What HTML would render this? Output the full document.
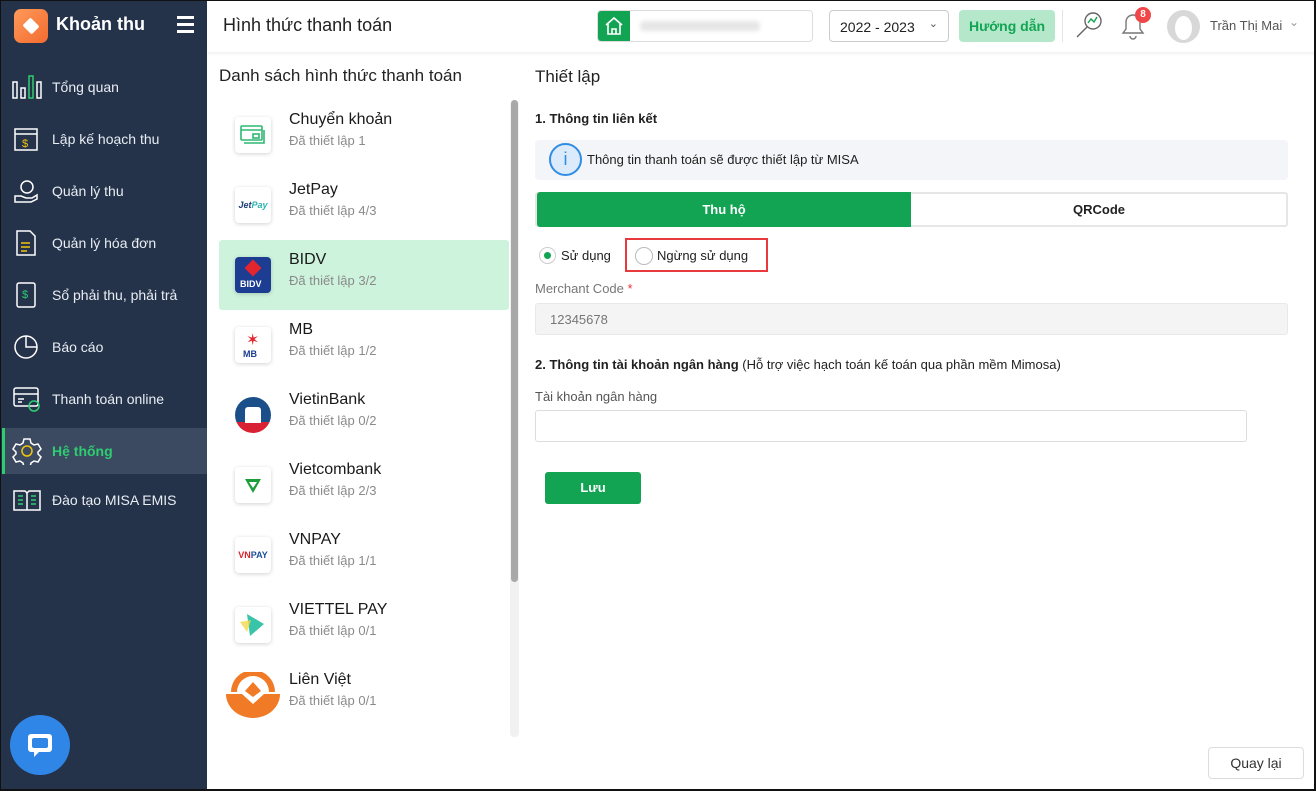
<!DOCTYPE html>
<html><head><meta charset="utf-8"><style>
*{box-sizing:border-box;margin:0;padding:0}
body{width:1316px;height:791px;overflow:hidden;font-family:"Liberation Sans",sans-serif;background:#fff;position:relative;color:#212121}
.a{position:absolute}
#frame{position:absolute;left:0;top:0;width:1316px;height:791px;border:2px solid #111;border-left-width:1px;border-top-width:1px;pointer-events:none;z-index:10}
.side{left:0;top:0;width:207px;height:791px;background:#25334a}
.mi{position:absolute;left:0;width:207px;height:46px;color:#e8edf3;font-size:14px;display:flex;align-items:center}
.mi span{position:absolute;left:52px}
.mi svg{position:absolute;left:12px}
.li{position:absolute;left:219px;width:290px;height:70px}
.li .ic{position:absolute;left:16px;top:17px;width:36px;height:36px;background:#fff;border-radius:4px;box-shadow:0 1px 4px rgba(0,0,0,.18);display:flex;align-items:center;justify-content:center;overflow:hidden}
.li .n{position:absolute;left:70px;top:11px;font-size:16px;color:#1a1a1a}
.li .s{position:absolute;left:70px;top:33px;font-size:13px;color:#8a8a8a}
</style></head><body>
<div id="frame"></div>
<div class="a side">
  <div class="a" style="left:14px;top:9px;width:34px;height:34px;border-radius:7px;background:linear-gradient(135deg,#ff9a5a,#f26b2f)"><div class="a" style="left:9px;top:10px;width:16px;height:14px;background:#fff;transform:rotate(45deg) scale(.8);border-radius:2px"></div></div>
  <div class="a" style="left:56px;top:14px;color:#fff;font-size:18px;font-weight:bold">Khoản thu</div>
  <div class="a" style="left:177px;top:16px;width:17px;height:3px;background:#fff;box-shadow:0 7px 0 #fff,0 14px 0 #fff"></div>
  <div class="mi" style="top:64px"><svg width="30" height="26" viewBox="0 0 30 26" fill="none" stroke="#fff" stroke-width="1.5"><rect x="1" y="8" width="4" height="16"/><rect x="9" y="14" width="4" height="10"/><rect x="17" y="2" width="4" height="22" stroke="#2ecc71"/><rect x="25" y="8" width="4" height="16"/></svg><span>Tổng quan</span></div>
  <div class="mi" style="top:116px"><svg width="30" height="26" viewBox="0 0 30 26" fill="none" stroke="#fff" stroke-width="1.5"><rect x="3" y="3" width="22" height="21"/><line x1="3" y1="8" x2="25" y2="8"/><text x="10" y="21" font-size="11" fill="#f1c40f" stroke="none">$</text></svg><span>Lập kế hoạch thu</span></div>
  <div class="mi" style="top:168px"><svg width="30" height="26" viewBox="0 0 30 26" fill="none" stroke="#fff" stroke-width="1.5"><circle cx="15" cy="9" r="6"/><path d="M3 18h6l5 2h6l5-3v4l-6 3H3z"/></svg><span>Quản lý thu</span></div>
  <div class="mi" style="top:220px"><svg width="30" height="26" viewBox="0 0 30 26" fill="none" stroke="#fff" stroke-width="1.5"><path d="M5 1h13l5 5v19H5z"/><path d="M9 13h9M9 17h9M9 21h6" stroke="#f1c40f"/></svg><span>Quản lý hóa đơn</span></div>
  <div class="mi" style="top:272px"><svg width="30" height="26" viewBox="0 0 30 26" fill="none" stroke="#fff" stroke-width="1.5"><rect x="5" y="1" width="18" height="24" rx="2"/><text x="10" y="16" font-size="11" fill="#2ecc71" stroke="none">$</text></svg><span>Sổ phải thu, phải trả</span></div>
  <div class="mi" style="top:324px"><svg width="30" height="26" viewBox="0 0 30 26" fill="none" stroke="#fff" stroke-width="1.5"><circle cx="14" cy="13" r="11"/><path d="M14 2v11h11"/></svg><span>Báo cáo</span></div>
  <div class="mi" style="top:376px"><svg width="30" height="26" viewBox="0 0 30 26" fill="none" stroke="#fff" stroke-width="1.5"><rect x="2" y="2" width="24" height="18" rx="2"/><line x1="2" y1="8" x2="26" y2="8"/><path d="M6 13h6M6 16h4"/><circle cx="22" cy="20" r="5" stroke="#2ecc71"/></svg><span>Thanh toán online</span></div>
  <div class="a" style="left:2px;top:428px;width:205px;height:46px;background:#3c4a61;border-left:3px solid #2ecc71"></div>
  <div class="mi" style="top:428px;color:#2ecc71;font-weight:bold"><svg width="30" height="28" viewBox="0 0 30 28" fill="none" stroke="#fff" stroke-width="1.5"><path d="M12 2h6l1 4 3 2 4-1 3 5-3 3v2l3 3-3 5-4-1-3 2-1 4h-6l-1-4-3-2-4 1-3-5 3-3v-2l-3-3 3-5 4 1 3-2z"/><circle cx="15" cy="14" r="5" stroke="#f1c40f"/></svg><span>Hệ thống</span></div>
  <div class="mi" style="top:477px"><svg width="30" height="26" viewBox="0 0 30 26" fill="none" stroke="#fff" stroke-width="1.5"><path d="M2 4h11l2 2 2-2h11v19H2z"/><line x1="15" y1="6" x2="15" y2="23"/><path d="M6 9h5M6 13h5M6 17h5M19 9h5M19 13h5M19 17h5" stroke="#2ecc71"/></svg><span>Đào tạo MISA EMIS</span></div>
  <div class="a" style="left:10px;top:715px;width:60px;height:60px;border-radius:50%;background:#2f86e6"><svg class="a" style="left:16px;top:16px" width="28" height="28" viewBox="0 0 28 28"><path d="M5 3h18a3 3 0 013 3v12a3 3 0 01-3 3H13l-5 5v-5H5a3 3 0 01-3-3V6a3 3 0 013-3z" fill="#fff"/><rect x="6" y="7" width="16" height="10" rx="2" fill="#2f86e6"/></svg></div>
</div>

<div class="a" style="left:207px;top:0;width:1109px;height:52px;background:#fff;box-shadow:0 2px 3px rgba(0,0,0,.06)"></div>
<div class="a" style="left:223px;top:15px;font-size:18px;color:#222">Hình thức thanh toán</div>
<div class="a" style="left:597px;top:10px;width:216px;height:32px;border:1px solid #ddd;border-radius:4px;overflow:hidden"><div class="a" style="left:0;top:0;width:32px;height:32px;background:#12a453"></div><svg class="a" style="left:6px;top:5px" width="20" height="20" viewBox="0 0 20 20" fill="none" stroke="#fff" stroke-width="1.6"><path d="M2 9l8-7 8 7M4 8v10h12V8M8 18v-5h4v5"/></svg><div class="a" style="left:42px;top:10px;width:120px;height:10px;background:#e6e6e6;border-radius:4px;filter:blur(2px)"></div></div>
<div class="a" style="left:829px;top:10px;width:120px;height:32px;border:1px solid #ccc;border-radius:4px;font-size:14px;padding:8px 10px">2022 - 2023<span class="a" style="right:10px;top:6px;font-size:11px;color:#555">⌄</span></div>
<div class="a" style="left:959px;top:10px;width:96px;height:32px;background:#b5e8cb;border-radius:4px;color:#12a453;font-weight:bold;font-size:14px;text-align:center;line-height:32px">Hướng dẫn</div>
<div class="a" style="left:1062px;top:10px;width:1px;height:32px;background:#e4e4e4"></div>
<svg class="a" style="left:1074px;top:10px" width="30" height="30" viewBox="0 0 30 30" fill="none" stroke="#666" stroke-width="1.4"><circle cx="19" cy="11" r="8"/><path d="M13 17L3 27"/><path d="M14 13l3-4 3 3 3-5" stroke="#12a453"/></svg>
<svg class="a" style="left:1120px;top:12px" width="26" height="28" viewBox="0 0 26 28" fill="none" stroke="#777" stroke-width="1.4"><path d="M13 3a7 7 0 017 7v7l3 4H3l3-4v-7a7 7 0 017-7zM10 24a3 3 0 006 0"/></svg>
<div class="a" style="left:1135px;top:7px;width:16px;height:16px;border-radius:50%;background:#f04848;color:#fff;font-size:10px;font-weight:bold;text-align:center;line-height:16px">8</div>
<div class="a" style="left:1167px;top:10px;width:33px;height:33px;border-radius:50%;background:#d8d8d8"><div class="a" style="left:8px;top:6px;width:17px;height:24px;border-radius:50%;background:#fff"></div></div>
<div class="a" style="left:1210px;top:18px;font-size:13px;color:#555">Trần Thị Mai</div>
<div class="a" style="left:1289px;top:15px;font-size:12px;color:#999">⌄</div>

<div class="a" style="left:219px;top:66px;font-size:17px;color:#222">Danh sách hình thức thanh toán</div>
<div class="a" style="left:510px;top:100px;width:9px;height:637px;background:#f1f1f1;border-radius:4px"></div>
<div class="a" style="left:511px;top:100px;width:7px;height:482px;background:#a8a8a8;border-radius:4px"></div>
<div class="a" style="left:219px;top:240px;width:290px;height:70px;background:#cdf3dc;border-radius:3px"></div>

<div class="li" style="top:100px"><div class="ic"><svg width="26" height="22" viewBox="0 0 26 22" fill="none" stroke="#2eb872" stroke-width="1.6"><rect x="1" y="2" width="21" height="14" rx="1"/><line x1="1" y1="6" x2="22" y2="6"/><rect x="13" y="10" width="6" height="4"/><path d="M4 19h20V6"/></svg></div><div class="n">Chuyển khoản</div><div class="s">Đã thiết lập 1</div></div>
<div class="li" style="top:170px"><div class="ic"><span style="font-size:9px;font-style:italic;font-weight:bold;color:#1f3d7a">Jet<span style="color:#2db3b0">Pay</span></span></div><div class="n">JetPay</div><div class="s">Đã thiết lập 4/3</div></div>
<div class="li" style="top:240px"><div class="ic" style="background:#1d3d93"><div class="a" style="left:12px;top:5px;width:12px;height:12px;background:#e3252d;transform:rotate(45deg)"></div><span class="a" style="left:5px;top:22px;font-size:9px;color:#fff;font-weight:bold">BIDV</span></div><div class="n">BIDV</div><div class="s">Đã thiết lập 3/2</div></div>
<div class="li" style="top:310px"><div class="ic"><span class="a" style="left:11px;top:3px;font-size:16px;color:#e3252d">✶</span><span class="a" style="left:8px;top:22px;font-size:9px;color:#1d3d93;font-weight:bold">MB</span></div><div class="n">MB</div><div class="s">Đã thiết lập 1/2</div></div>
<div class="li" style="top:380px"><div class="a" style="left:16px;top:17px;width:36px;height:36px;border-radius:50%;background:linear-gradient(#1b4f8a 70%,#d82233 70%);overflow:hidden"><div class="a" style="left:10px;top:10px;width:16px;height:16px;background:#fff;border-radius:3px 3px 0 0"></div></div><div class="n">VietinBank</div><div class="s">Đã thiết lập 0/2</div></div>
<div class="li" style="top:450px"><div class="ic"><svg width="18" height="18" viewBox="0 0 18 18"><path d="M1 3h16L9 17z" fill="#1e9e3a"/><path d="M5 6h8L9 12z" fill="#fff"/></svg></div><div class="n">Vietcombank</div><div class="s">Đã thiết lập 2/3</div></div>
<div class="li" style="top:520px"><div class="ic"><span style="font-size:9px;font-weight:bold;color:#d8232a">VN<span style="color:#1b4f9c">PAY</span></span></div><div class="n">VNPAY</div><div class="s">Đã thiết lập 1/1</div></div>
<div class="li" style="top:590px"><div class="ic"><svg width="30" height="30" viewBox="0 0 30 30"><path d="M9 4l17 10-14 12z" fill="#38c4a8"/><path d="M2 12l11-2-4 12z" fill="#f3d94c" opacity=".8"/></svg></div><div class="n">VIETTEL PAY</div><div class="s">Đã thiết lập 0/1</div></div>
<div class="li" style="top:660px"><svg class="a" style="left:7px;top:12px" width="54" height="46" viewBox="0 0 54 46"><path d="M5 20a22 22 0 0144 0h-6a16 16 0 00-32 0z" fill="#f07a25"/><path d="M0 22h16l11 10 11-10h16a27 24 0 01-54 0z" fill="#f07a25"/><path d="M27 10l8 9-8 6-8-6z" fill="#f07a25"/></svg><div class="n">Liên Việt</div><div class="s">Đã thiết lập 0/1</div></div>

<div class="a" style="left:535px;top:67px;font-size:17px;color:#222">Thiết lập</div>
<div class="a" style="left:535px;top:111px;font-size:13px;font-weight:bold">1. Thông tin liên kết</div>
<div class="a" style="left:535px;top:140px;width:753px;height:40px;background:#f4f5f8;border-radius:4px"></div>
<div class="a" style="left:549px;top:143px;width:33px;height:33px;border-radius:50%;border:2px solid #2f8de4;background:#dcebfb;color:#2f8de4;text-align:center;font-size:18px;line-height:29px">i</div>
<div class="a" style="left:587px;top:152px;font-size:13px">Thông tin thanh toán sẽ được thiết lập từ MISA</div>
<div class="a" style="left:535px;top:192px;width:753px;height:35px;border:2px solid #e6e6e6;border-radius:3px;background:#fff"></div>
<div class="a" style="left:537px;top:192px;width:374px;height:35px;background:#12a453;border-radius:3px 0 0 3px;color:#fff;font-weight:bold;font-size:13px;text-align:center;line-height:35px">Thu hộ</div>
<div class="a" style="left:911px;top:192px;width:376px;height:35px;font-weight:bold;font-size:13px;text-align:center;line-height:35px">QRCode</div>
<div class="a" style="left:539px;top:247px;width:17px;height:17px;border-radius:50%;border:1px solid #ccc"><div class="a" style="left:4px;top:4px;width:7px;height:7px;border-radius:50%;background:#12a453"></div></div>
<div class="a" style="left:561px;top:248px;font-size:13px">Sử dụng</div>
<div class="a" style="left:625px;top:238px;width:143px;height:34px;border:2px solid #e8393d"></div>
<div class="a" style="left:635px;top:247px;width:18px;height:18px;border-radius:50%;border:1px solid #bbb"></div>
<div class="a" style="left:657px;top:248px;font-size:13px">Ngừng sử dụng</div>
<div class="a" style="left:535px;top:281px;font-size:13px;color:#777">Merchant Code <span style="color:#e8393d">*</span></div>
<div class="a" style="left:535px;top:303px;width:753px;height:32px;background:#f4f4f4;border:1px solid #e8e8e8;border-radius:3px;font-size:13px;color:#777;padding:8px 14px">12345678</div>
<div class="a" style="left:535px;top:357px;font-size:13px"><b>2. Thông tin tài khoản ngân hàng</b> (Hỗ trợ việc hạch toán kế toán qua phần mềm Mimosa)</div>
<div class="a" style="left:535px;top:389px;font-size:13px;color:#555">Tài khoản ngân hàng</div>
<div class="a" style="left:535px;top:410px;width:712px;height:32px;border:1px solid #ddd;border-radius:3px"></div>
<div class="a" style="left:545px;top:472px;width:96px;height:32px;background:#12a453;border-radius:3px;color:#fff;font-weight:bold;font-size:13px;text-align:center;line-height:32px">Lưu</div>
<div class="a" style="left:1208px;top:747px;width:96px;height:32px;border:1px solid #ddd;border-radius:4px;font-size:14px;text-align:center;line-height:30px;color:#333">Quay lại</div>
</body></html>
